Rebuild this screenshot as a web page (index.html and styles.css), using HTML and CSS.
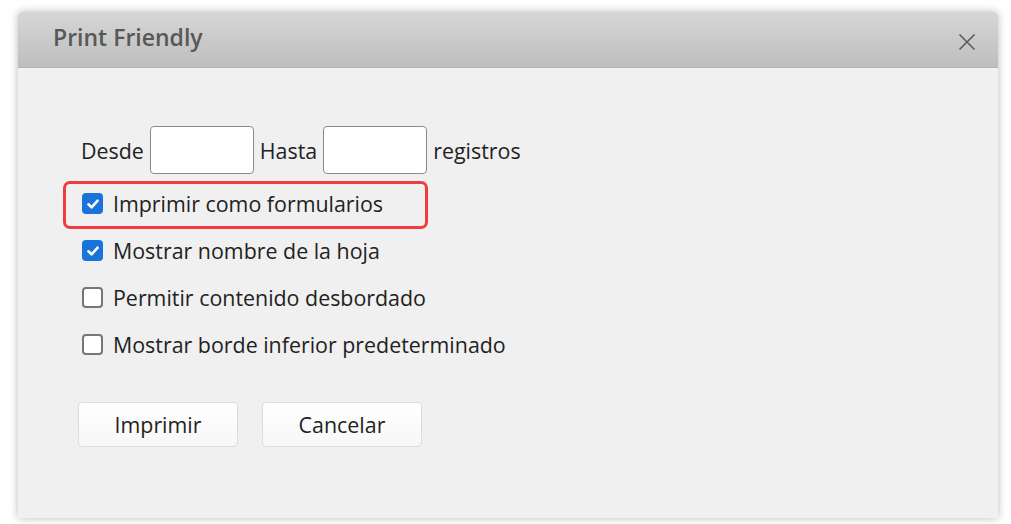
FILE: index.html
```html
<!DOCTYPE html>
<html lang="es">
<head>
<meta charset="utf-8">
<title>Print Friendly</title>
<link rel="stylesheet" href="styles.css">
</head>
<body>
<div class="dialog">
  <div class="header">
    <span class="title">Print Friendly</span>
    <span class="close" aria-label="Cerrar">
      <svg width="18" height="18" viewBox="0 0 18 18"><path d="M1.5 1.5 L16.5 16.5 M16.5 1.5 L1.5 16.5" stroke="#5a5a5a" stroke-width="1.6" fill="none"/></svg>
    </span>
  </div>
  <div class="content">
    <div class="range">
      <span>Desde</span>
      <span class="field"></span>
      <span>Hasta</span>
      <span class="field"></span>
      <span>registros</span>
    </div>
    <div class="options">
      <div class="option highlighted">
        <span class="box checked"><svg width="14" height="14" viewBox="0 0 14 14"><path d="M2.4 7.3 L5.6 10.3 L11.6 3.7" stroke="#fff" stroke-width="2.6" fill="none" stroke-linecap="round" stroke-linejoin="round"/></svg></span>
        <span>Imprimir como formularios</span>
      </div>
      <div class="option">
        <span class="box checked"><svg width="14" height="14" viewBox="0 0 14 14"><path d="M2.4 7.3 L5.6 10.3 L11.6 3.7" stroke="#fff" stroke-width="2.6" fill="none" stroke-linecap="round" stroke-linejoin="round"/></svg></span>
        <span>Mostrar nombre de la hoja</span>
      </div>
      <div class="option">
        <span class="box"></span>
        <span>Permitir contenido desbordado</span>
      </div>
      <div class="option">
        <span class="box"></span>
        <span>Mostrar borde inferior predeterminado</span>
      </div>
    </div>
    <div class="actions">
      <span class="btn">Imprimir</span>
      <span class="btn">Cancelar</span>
    </div>
  </div>
</div>
</body>
</html>
```
FILE: styles.css
```css
html, body {
  margin: 0;
  padding: 0;
  background: #ffffff;
}
body {
  padding: 12px 13px 6px 18px;
  font-family: "Open Sans", "Noto Sans", sans-serif;
  color: #222;
}
.dialog {
  width: 980px;
  height: 506px;
  background: #f0f0f0;
  border-radius: 5px 5px 2px 2px;
  box-shadow: 0 0 9px rgba(0, 0, 0, 0.28);
  display: flex;
  flex-direction: column;
}
.header {
  height: 56px;
  box-sizing: border-box;
  border-radius: 5px 5px 0 0;
  background: linear-gradient(#d6d6d6, #bebebe);
  border-bottom: 1px solid #b4b4b4;
  display: flex;
  align-items: center;
  justify-content: space-between;
  padding: 0 22px 0 35px;
}
.title {
  font-size: 23px;
  font-weight: 600;
  color: #585858;
  margin-top: -6px;
}
.close {
  display: flex;
  margin-top: 4px;
}
.content {
  padding: 58px 0 0 63px;
  font-size: 21.4px;
}
.range {
  display: flex;
  align-items: center;
  gap: 6px;
  height: 48px;
}
.field {
  width: 104px;
  height: 48px;
  box-sizing: border-box;
  background: #fff;
  border: 1px solid #8a8a8a;
  border-radius: 4px;
}
.options {
  margin-top: 6px;
  display: flex;
  flex-direction: column;
}
.option {
  height: 47px;
  display: flex;
  align-items: center;
  gap: 10px;
  padding-left: 1px;
}
.highlighted {
  position: relative;
}
.highlighted::after {
  content: "";
  position: absolute;
  left: -18px;
  top: 1px;
  width: 365px;
  height: 48px;
  box-sizing: border-box;
  border: 3px solid #f23c3c;
  border-radius: 7px;
}
.box {
  width: 21px;
  height: 21px;
  box-sizing: border-box;
  border: 2px solid #767676;
  border-radius: 4px;
  background: #fff;
  display: flex;
  align-items: center;
  justify-content: center;
}
.box.checked {
  border: none;
  background: #1a73d9;
}
.actions {
  margin-top: 34px;
  margin-left: -3px;
  display: flex;
  gap: 24px;
}
.btn {
  width: 160px;
  height: 45px;
  box-sizing: border-box;
  border: 1px solid #dcdcdc;
  border-radius: 4px;
  background: linear-gradient(#ffffff, #f7f7f7);
  display: flex;
  align-items: center;
  justify-content: center;
  font-size: 21.4px;
  color: #222;
}
```
